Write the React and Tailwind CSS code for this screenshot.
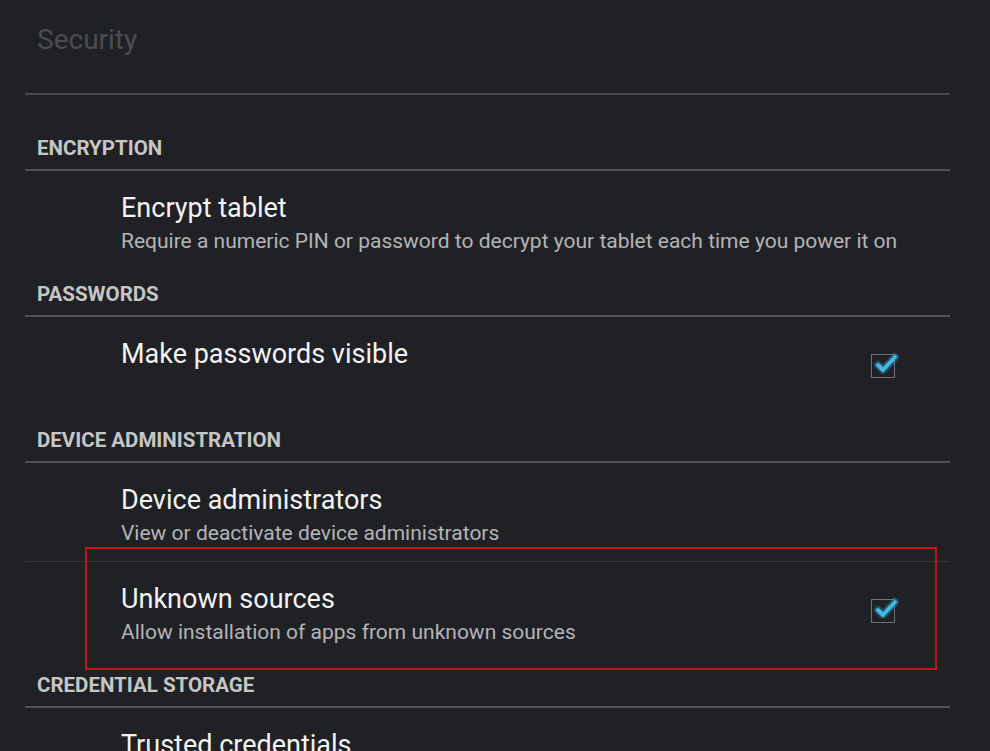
import { useState } from "react";

const Header = ({ label, first }) => (
  <div className={first ? "pt-[41px]" : "pt-[13px]"}>
    <div className="px-[12px] pb-[9px] text-[20.5px] leading-[24px] font-bold text-[#c6c6c6]">{label}</div>
    <div className="h-[2px] bg-[#505154]" />
  </div>
);

const Check = ({ checked, onClick }) => (
  <button onClick={onClick} className="relative w-[24px] h-[24px] mr-[55px] border border-[#707174]">
    {checked && (
      <svg className="absolute left-[2px] top-[-3px] overflow-visible" width="26" height="22" viewBox="0 0 26 22">
        <path d="M4 13 L9 18 L21 5" fill="none" stroke="#33b5e5" strokeOpacity="0.3" strokeWidth="8" strokeLinecap="round" strokeLinejoin="round" />
        <path d="M4 13 L9 18 L21 5" fill="none" stroke="#3fb8e6" strokeWidth="4" strokeLinecap="round" strokeLinejoin="round" />
      </svg>
    )}
  </button>
);

const Item = ({ title, summary, checkbox, checked, onToggle }) => (
  <div className="min-h-[98px] flex items-center">
    <div className="flex-1 self-start pt-[21px] pl-[96px]">
      <div className="text-[27px] leading-[32px] text-[#f2f2f2]">{title}</div>
      {summary && <div className="mt-[5px] text-[21px] leading-[24px] text-[#b4b4b6]">{summary}</div>}
    </div>
    {checkbox && <Check checked={checked} onClick={onToggle} />}
  </div>
);

export default function App() {
  const [showPw, setShowPw] = useState(true);
  const [unknown, setUnknown] = useState(true);

  return (
    <div className="relative w-[990px] h-[751px] overflow-hidden bg-[#202125]" style={{ fontFamily: "Roboto, 'Noto Sans', sans-serif" }}>
      <div className="ml-[25px] w-[925px]">
        <div className="h-[93px] pt-[24px] px-[12px] text-[28px] leading-[32px] text-[#4b4c50]">Security</div>
        <div className="h-[2px] bg-[#47484b]" />

        <Header label="ENCRYPTION" first />
        <Item title="Encrypt tablet" summary="Require a numeric PIN or password to decrypt your tablet each time you power it on" />

        <Header label="PASSWORDS" />
        <Item title="Make passwords visible" checkbox checked={showPw} onToggle={() => setShowPw(!showPw)} />

        <Header label="DEVICE ADMINISTRATION" />
        <Item title="Device administrators" summary="View or deactivate device administrators" />
        <div className="h-px bg-[#37383b]" />
        <Item title="Unknown sources" summary="Allow installation of apps from unknown sources" checkbox checked={unknown} onToggle={() => setUnknown(!unknown)} />

        <Header label="CREDENTIAL STORAGE" />
        <Item title="Trusted credentials" summary="Display trusted CA certificates" />
      </div>

      {/* highlight annotation */}
      <div className="absolute left-[85px] top-[547px] w-[852px] h-[123px] border-2 border-[#c41418] pointer-events-none" />
    </div>
  );
}
